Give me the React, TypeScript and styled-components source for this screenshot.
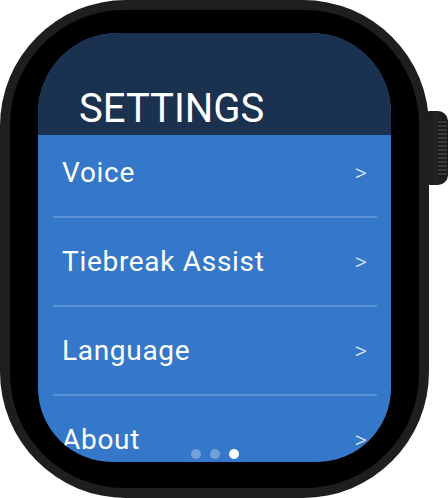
import React from 'react';
import styled, {createGlobalStyle} from "styled-components";

const colors = {
    case: '#1e1e1e',
    bezel: '#000000',
    header: '#1a3150',
    list: '#3578c9',
    line: 'rgba(255, 255, 255, 0.2)',
    white: '#ffffff',
};

const GlobalStyle = createGlobalStyle`
  html, body {
    margin: 0;
    padding: 0;
    background: #ffffff;
  }

  body {
    font-family: Roboto, "Liberation Sans", Arial, sans-serif;
    -webkit-font-smoothing: antialiased;
  }
`

const Stage = styled.div`
  width: 448px;
  height: 498px;
  display: flex;
  align-items: flex-start;
  overflow: hidden;
`

const Case = styled.div`
  width: 429px;
  height: 498px;
  box-sizing: border-box;
  padding: 10px;
  border-radius: 126px;
  background-color: ${colors.case};
  position: relative;
  z-index: 1;
`

const Bezel = styled.div`
  width: 100%;
  height: 100%;
  box-sizing: border-box;
  padding: 23px 28px 26px 28px;
  border-radius: 114px;
  background-color: ${colors.bezel};
`

const Screen = styled.div`
  width: 100%;
  height: 100%;
  display: flex;
  flex-direction: column;
  border-radius: 80px 80px 74px 74px;
  overflow: hidden;
  background-color: ${colors.list};
  position: relative;
`

const Header = styled.div`
  height: 102px;
  flex-shrink: 0;
  display: flex;
  align-items: flex-end;
  box-sizing: border-box;
  padding: 0 0 6px 41px;
  background-color: ${colors.header};
`

const Title = styled.h1`
  margin: 0;
  font-size: 40px;
  line-height: 40px;
  font-weight: 400;
  color: ${colors.white};
`

const List = styled.div`
  display: flex;
  flex-direction: column;
`

const Row = styled.div<{ $first?: boolean }>`
  height: ${props => props.$first ? '81px' : '87px'};
  flex-shrink: 0;
  display: flex;
  align-items: center;
  justify-content: space-between;
  box-sizing: border-box;
  padding: 0 24px ${props => props.$first ? '6px' : '0'} 24px;
`

const Label = styled.span`
  font-size: 28px;
  letter-spacing: 0.7px;
  color: ${colors.white};
`

const Chevron = styled.span`
  font-size: 24px;
  font-weight: 300;
  color: rgba(255, 255, 255, 0.85);
`

const Divider = styled.div`
  height: 2px;
  flex-shrink: 0;
  margin: 0 14px 0 15px;
  background-color: ${colors.line};
`

const Dots = styled.div`
  position: absolute;
  left: 0;
  right: 0;
  bottom: 3px;
  display: flex;
  justify-content: center;
  gap: 9px;
`

const Dot = styled.span<{ $active?: boolean }>`
  width: 10px;
  height: 10px;
  border-radius: 50%;
  background-color: ${props => props.$active ? colors.white : 'rgba(255, 255, 255, 0.3)'};
`

const Crown = styled.div`
  width: 28px;
  height: 74px;
  margin: 111px 0 0 -9px;
  box-sizing: border-box;
  border-radius: 10px;
  background:
    repeating-linear-gradient(
      to bottom,
      #1a1a1a 0px,
      #1a1a1a 2px,
      #3a3a3a 2px,
      #3a3a3a 4px
    ) right 1px top 8px / 9px 58px no-repeat,
    linear-gradient(to right, #121212, #232323 55%, #1a1a1a);
`

const items = ['Voice', 'Tiebreak Assist', 'Language', 'About'];

const App: React.FC = () => {
    return (
        <>
            <GlobalStyle/>
            <Stage>
                <Case>
                    <Bezel>
                        <Screen>
                            <Header>
                                <Title>SETTINGS</Title>
                            </Header>
                            <List>
                                {
                                    items.map((item, index) => (
                                        <React.Fragment key={item}>
                                            {index > 0 && <Divider/>}
                                            <Row $first={index === 0}>
                                                <Label>{item}</Label>
                                                <Chevron>&gt;</Chevron>
                                            </Row>
                                        </React.Fragment>
                                    ))
                                }
                            </List>
                            <Dots>
                                <Dot/>
                                <Dot/>
                                <Dot $active/>
                            </Dots>
                        </Screen>
                    </Bezel>
                </Case>
                <Crown/>
            </Stage>
        </>
    );
};

export default App;
